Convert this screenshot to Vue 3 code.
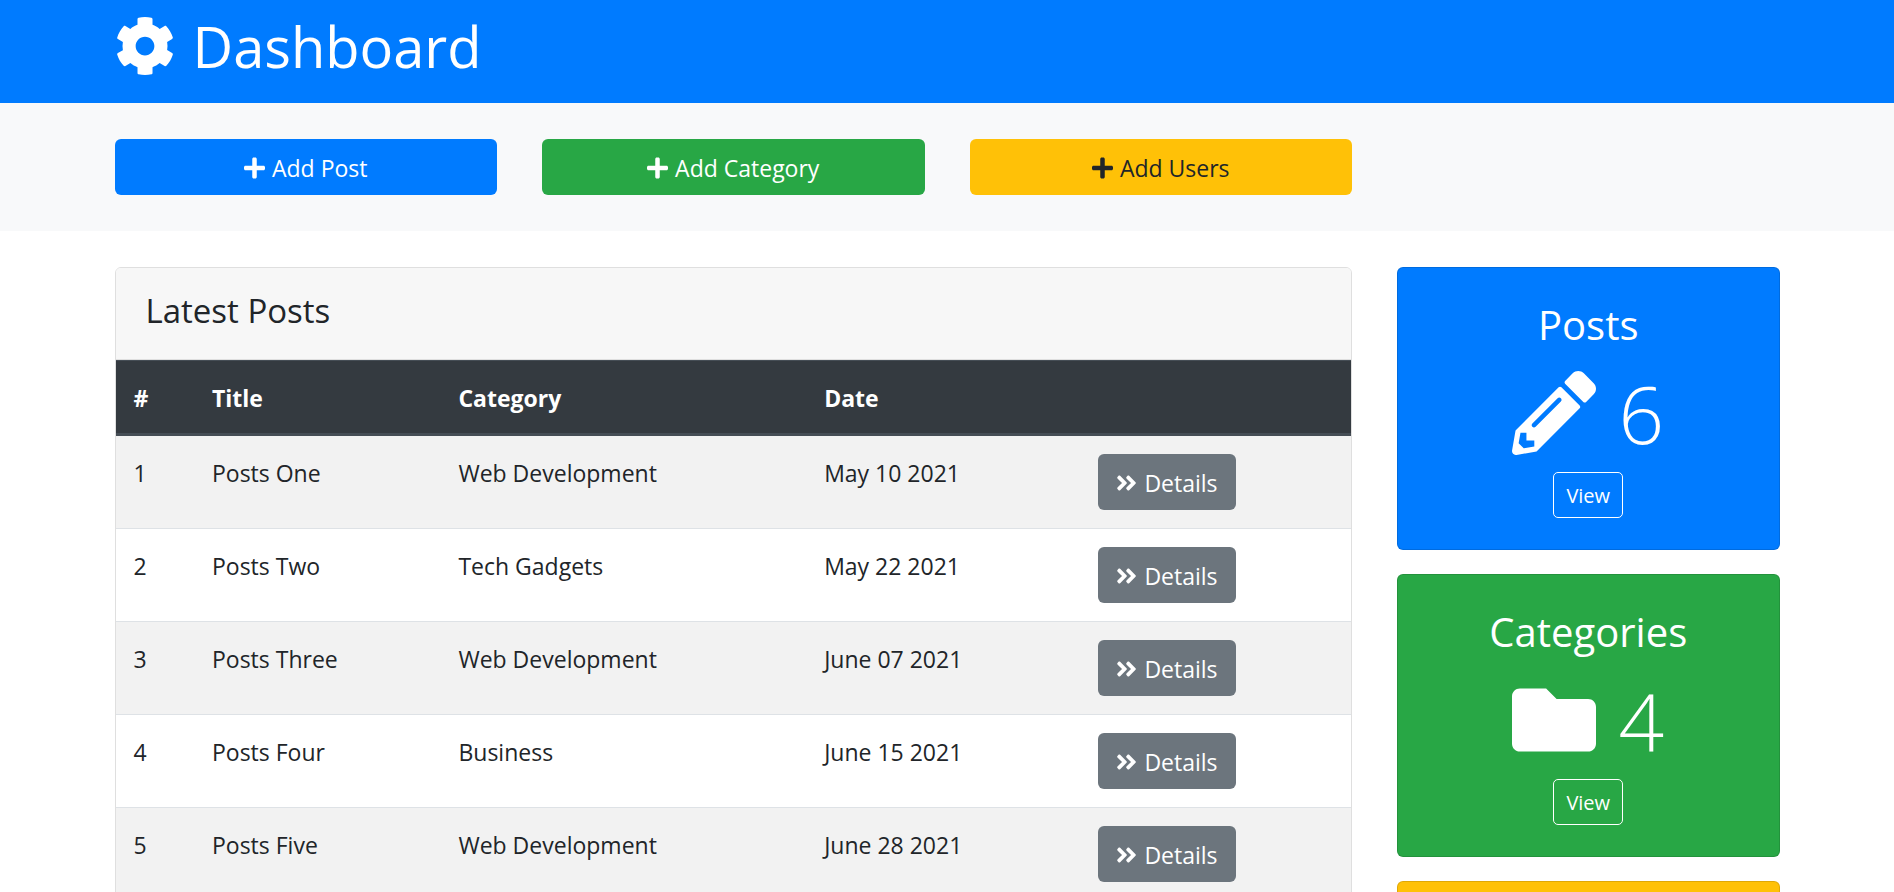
<script setup>
const icons = {
  cog: { w: 512, d: 'M487.4 315.7l-42.6-24.6c4.3-23.2 4.3-47 0-70.2l42.6-24.6c4.9-2.8 7.1-8.6 5.5-14-11.1-35.6-30-67.8-54.7-94.6-3.8-4.1-10-5.1-14.8-2.3L380.8 110c-17.9-15.4-38.5-27.3-60.8-35.1V25.8c0-5.6-3.9-10.5-9.4-11.7-36.7-8.2-74.3-7.8-109.2 0-5.5 1.2-9.4 6.1-9.4 11.7V75c-22.2 7.9-42.8 19.8-60.8 35.1L88.7 85.5c-4.9-2.8-11-1.9-14.8 2.3-24.7 26.7-43.6 58.9-54.7 94.6-1.7 5.4.6 11.2 5.5 14L67.3 221c-4.3 23.2-4.3 47 0 70.2l-42.6 24.6c-4.9 2.8-7.1 8.6-5.5 14 11.1 35.6 30 67.8 54.7 94.6 3.8 4.1 10 5.1 14.8 2.3l42.6-24.6c17.9 15.4 38.5 27.3 60.8 35.1v49.2c0 5.6 3.9 10.5 9.4 11.7 36.7 8.2 74.3 7.8 109.2 0 5.5-1.2 9.4-6.1 9.4-11.7v-49.2c22.2-7.9 42.8-19.8 60.8-35.1l42.6 24.6c4.9 2.8 11 1.9 14.8-2.3 24.7-26.7 43.6-58.9 54.7-94.6 1.5-5.5-.7-11.3-5.6-14.1zM256 336c-44.1 0-80-35.9-80-80s35.9-80 80-80 80 35.9 80 80-35.9 80-80 80z' },
  plus: { w: 448, d: 'M416 208H272V64c0-17.67-14.33-32-32-32h-32c-17.67 0-32 14.33-32 32v144H32c-17.67 0-32 14.33-32 32v32c0 17.67 14.33 32 32 32h144v144c0 17.67 14.33 32 32 32h32c17.67 0 32-14.33 32-32V304h144c17.67 0 32-14.33 32-32v-32c0-17.67-14.33-32-32-32z' },
  angles: { w: 448, d: 'M224.3 273l-136 136c-9.4 9.4-24.6 9.4-33.9 0l-22.6-22.6c-9.4-9.4-9.4-24.6 0-33.9l96.4-96.4-96.4-96.4c-9.4-9.4-9.4-24.6 0-33.9L54.3 103c9.4-9.4 24.6-9.4 33.9 0l136 136c9.5 9.4 9.5 24.6.1 34zm192-34l-136-136c-9.4-9.4-24.6-9.4-33.9 0l-22.6 22.6c-9.4 9.4-9.4 24.6 0 33.9l96.4 96.4-96.4 96.4c-9.4 9.4-9.4 24.6 0 33.9l22.6 22.6c9.4 9.4 24.6 9.4 33.9 0l136-136c9.4-9.2 9.4-24.4 0-33.8z' },
  pencil: { w: 512, d: 'M497.9 142.1l-46.1 46.1c-4.7 4.7-12.3 4.7-17 0l-111-111c-4.7-4.7-4.7-12.3 0-17l46.1-46.1c18.7-18.7 49.1-18.7 67.9 0l60.1 60.1c18.8 18.7 18.8 49.1 0 67.9zM284.2 99.8L21.6 362.4.4 483.9c-2.9 16.4 11.4 30.6 27.8 27.8l121.5-21.3 262.6-262.6c4.7-4.7 4.7-12.3 0-17l-111-111c-4.8-4.7-12.4-4.7-17.1 0zM124.1 339.9c-5.5-5.5-5.5-14.3 0-19.8l154-154c5.5-5.5 14.3-5.5 19.8 0s5.5 14.3 0 19.8l-154 154c-5.5 5.5-14.3 5.5-19.8 0zM88 424h48v36.3l-64.5 11.3-31.1-31.1L51.7 376H88v48z' },
  folder: { w: 512, d: 'M464 128H272l-64-64H48C21.49 64 0 85.49 0 112v288c0 26.51 21.49 48 48 48h416c26.51 0 48-21.49 48-48V176c0-26.51-21.49-48-48-48z' },
}

const actions = [
  { label: 'Add Post', tone: 'primary' },
  { label: 'Add Category', tone: 'success' },
  { label: 'Add Users', tone: 'warning' },
]

const posts = [
  { id: 1, title: 'Posts One', category: 'Web Development', date: 'May 10 2021' },
  { id: 2, title: 'Posts Two', category: 'Tech Gadgets', date: 'May 22 2021' },
  { id: 3, title: 'Posts Three', category: 'Web Development', date: 'June 07 2021' },
  { id: 4, title: 'Posts Four', category: 'Business', date: 'June 15 2021' },
  { id: 5, title: 'Posts Five', category: 'Web Development', date: 'June 28 2021' },
]

const stats = [
  { label: 'Posts', count: 6, icon: icons.pencil, tone: 'primary' },
  { label: 'Categories', count: 4, icon: icons.folder, tone: 'success' },
]
</script>

<template>
  <header class="masthead primary">
    <div class="container">
      <h1>
        <svg class="icon" viewBox="0 0 512 512" aria-hidden="true"><path :d="icons.cog.d" /></svg>
        Dashboard
      </h1>
    </div>
  </header>

  <section class="actions">
    <div class="container grid">
      <button v-for="a in actions" :key="a.label" type="button" class="btn" :class="a.tone">
        <svg class="icon narrow" viewBox="0 0 448 512" aria-hidden="true"><path :d="icons.plus.d" /></svg>
        {{ a.label }}
      </button>
    </div>
  </section>

  <main class="container grid content">
    <section class="card">
      <div class="card-header"><h4>Latest Posts</h4></div>
      <table>
        <colgroup>
          <col class="c-id" /><col class="c-title" /><col class="c-cat" /><col class="c-date" /><col />
        </colgroup>
        <thead>
          <tr><th>#</th><th>Title</th><th>Category</th><th>Date</th><th></th></tr>
        </thead>
        <tbody>
          <tr v-for="p in posts" :key="p.id">
            <td>{{ p.id }}</td>
            <td>{{ p.title }}</td>
            <td>{{ p.category }}</td>
            <td>{{ p.date }}</td>
            <td>
              <a href="#" class="btn secondary">
                <svg class="icon narrow" viewBox="0 0 448 512" aria-hidden="true"><path :d="icons.angles.d" /></svg>
                Details
              </a>
            </td>
          </tr>
        </tbody>
      </table>
    </section>

    <aside class="stats">
      <div v-for="s in stats" :key="s.label" class="stat" :class="s.tone">
        <h3>{{ s.label }}</h3>
        <p class="count">
          <svg class="icon" viewBox="0 0 512 512" aria-hidden="true"><path :d="s.icon.d" /></svg>
          <span>{{ s.count }}</span>
        </p>
        <a href="#" class="view">View</a>
      </div>
      <div class="stat warning"></div>
    </aside>
  </main>
</template>

<style>
body {
  margin: 0;
  background: #fff;
  color: #212529;
  font: 400 23px/36px "Open Sans", "Noto Sans", sans-serif;
}
</style>

<style scoped>
* { box-sizing: border-box; }
.container { max-width: 1665px; margin: 0 auto; }
.grid { display: grid; grid-template-columns: repeat(4, 1fr); column-gap: 45px; }
.icon { height: 1em; width: 1em; fill: currentColor; flex: none; }

.primary { background: #007bff; color: #fff; }
.success { background: #28a745; color: #fff; }
.warning { background: #ffc107; color: #212529; }
.secondary { background: #6c757d; color: #fff; }

.masthead { padding: 10px 0 21px; }
h1, h3, h4 { margin: 0; font-weight: 400; }
h1 { display: flex; align-items: center; gap: 18px; font-size: 56px; line-height: 72px; }
h1 .icon { width: 60px; height: 60px; }

.actions { background: #f8f9fa; padding: 36px 0; }
.btn {
  display: inline-flex;
  align-items: center;
  justify-content: center;
  gap: 7px;
  height: 56px;
  padding: 2px 18px 0;
  border: 0;
  border-radius: 6px;
  font: inherit;
  text-decoration: none;
}
.icon.narrow { width: 21px; height: 24px; }

.content { margin-top: 36px; align-items: start; }
.card { grid-column: span 3; border: 1px solid #dfdfdf; border-radius: 6px; overflow: hidden; }
.card-header { padding: 21px 30px 27px; background: #f7f7f7; border-bottom: 1px solid #dfdfdf; }
h4 { font-size: 33px; line-height: 43px; }

table { width: 100%; table-layout: fixed; border-spacing: 0; }
.c-id { width: 6.35%; }
.c-title { width: 19.95%; }
.c-cat { width: 29.6%; }
.c-date { width: 22.2%; }
th, td { padding: 18px; text-align: left; vertical-align: top; border-top: 1px solid #dee2e6; }
td { line-height: 38px; }
th { padding: 19px 18px 17px; background: #343a40; color: #fff; font-weight: 700; border-color: #454d55; border-bottom: 3px solid #454d55; }
td .btn { display: flex; width: max-content; }
tbody tr:nth-child(odd) { background: #f2f2f2; }
tbody tr:first-child td { border-top: 0; }

.stats { display: grid; gap: 24px; }
.stat {
  display: flex;
  flex-direction: column;
  align-items: center;
  min-height: 283px;
  padding: 31px 30px 30px;
  border: 1px solid rgba(0, 0, 0, 0.125);
  border-radius: 6px;
}
h3 { font-size: 40px; line-height: 52px; margin-bottom: 12px; }
.count { display: flex; align-items: center; gap: 22px; margin: 0 0 9px; font-size: 80px; line-height: 100px; font-weight: 300; }
.count .icon { width: 84px; height: 84px; }
.view { padding: 6px 12px 4px; border: 1px solid #fff; border-radius: 5px; color: #fff; font-size: 20px; line-height: 34px; text-decoration: none; }
</style>
